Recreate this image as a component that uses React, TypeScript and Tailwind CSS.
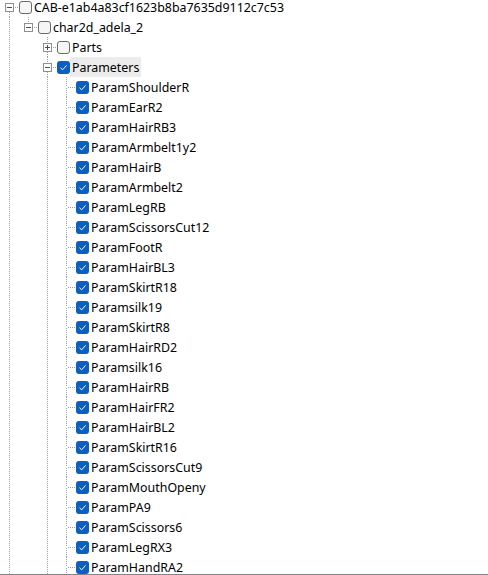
const params = [
  "ParamShoulderR",
  "ParamEarR2",
  "ParamHairRB3",
  "ParamArmbelt1y2",
  "ParamHairB",
  "ParamArmbelt2",
  "ParamLegRB",
  "ParamScissorsCut12",
  "ParamFootR",
  "ParamHairBL3",
  "ParamSkirtR18",
  "Paramsilk19",
  "ParamSkirtR8",
  "ParamHairRD2",
  "Paramsilk16",
  "ParamHairRB",
  "ParamHairFR2",
  "ParamHairBL2",
  "ParamSkirtR16",
  "ParamScissorsCut9",
  "ParamMouthOpeny",
  "ParamPA9",
  "ParamScissors6",
  "ParamLegRX3",
  "ParamHandRA2",
]

const LINE = "#a0a0a0"

type RowProps = {
  guides: boolean[]
  up: boolean
  down: boolean
  expander?: "plus" | "minus"
  checked: boolean
  label: string
  selected?: boolean
}

function GuideCell({ on }: { on: boolean }) {
  return (
    <svg width={19} height={20} className="block shrink-0">
      {on && <line x1={9.5} y1={0} x2={9.5} y2={20} stroke={LINE} strokeDasharray="1 1" />}
    </svg>
  )
}

function OwnCell({ up, down, expander }: { up: boolean; down: boolean; expander?: "plus" | "minus" }) {
  return (
    <svg width={19} height={20} className="block shrink-0">
      {up && <line x1={9.5} y1={0} x2={9.5} y2={10} stroke={LINE} strokeDasharray="1 1" />}
      {down && <line x1={9.5} y1={11} x2={9.5} y2={20} stroke={LINE} strokeDasharray="1 1" />}
      <line x1={expander ? 15 : 11} y1={10.5} x2={19} y2={10.5} stroke={LINE} strokeDasharray="1 1" />
      {expander && (
        <g>
          <rect x={5.5} y={6.5} width={8} height={8} fill="#fff" stroke="#8e8f8f" />
          <line x1={7} y1={10.5} x2={12} y2={10.5} stroke="#2c4f9e" />
          {expander === "plus" && <line x1={9.5} y1={8} x2={9.5} y2={13} stroke="#2c4f9e" />}
        </g>
      )}
    </svg>
  )
}

function CheckBox({ checked }: { checked: boolean }) {
  if (checked) {
    return (
      <span className="mt-[4px] block h-[13px] w-[13px] shrink-0 rounded-[3px] bg-[#0b5fc2]">
        <svg width={13} height={13} className="block">
          <path d="M3.5 6.8 L5.6 8.8 L9.6 4.4" fill="none" stroke="#fff" strokeWidth={1} />
        </svg>
      </span>
    )
  }
  return (
    <span className="mt-[4px] block h-[13px] w-[13px] shrink-0 rounded-[3px] border border-[#6b6b6b] bg-[#f6f6f6]" />
  )
}

function Row({ guides, up, down, expander, checked, label, selected }: RowProps) {
  return (
    <div className="flex h-[20px] items-start">
      {guides.map((g, i) => (
        <GuideCell key={i} on={g} />
      ))}
      <OwnCell up={up} down={down} expander={expander} />
      <CheckBox checked={checked} />
      <span
        className={`h-[20px] whitespace-nowrap px-[2px] text-[12.4px] leading-[22px] text-black ${
          selected ? "bg-[#ececec]" : ""
        }`}
      >
        {label}
      </span>
    </div>
  )
}

export default function App() {
  return (
    <div className="h-[575px] w-[488px] overflow-hidden border-b border-[#7f858b] bg-white font-['Noto_Sans','Noto_Sans_CJK_SC',sans-serif]">
      <div className="-mt-[3px]">
        <Row guides={[]} up={false} down expander="minus" checked={false} label="CAB-e1ab4a83cf1623b8ba7635d9112c7c53" />
        <Row guides={[true]} up down={false} expander="minus" checked={false} label="char2d_adela_2" />
        <Row guides={[true, false]} up down expander="plus" checked={false} label="Parts" />
        <Row guides={[true, false]} up down expander="minus" checked label="Parameters" selected />
        {params.map((p) => (
          <Row key={p} guides={[true, false, true]} up down checked label={p} />
        ))}
      </div>
    </div>
  )
}
